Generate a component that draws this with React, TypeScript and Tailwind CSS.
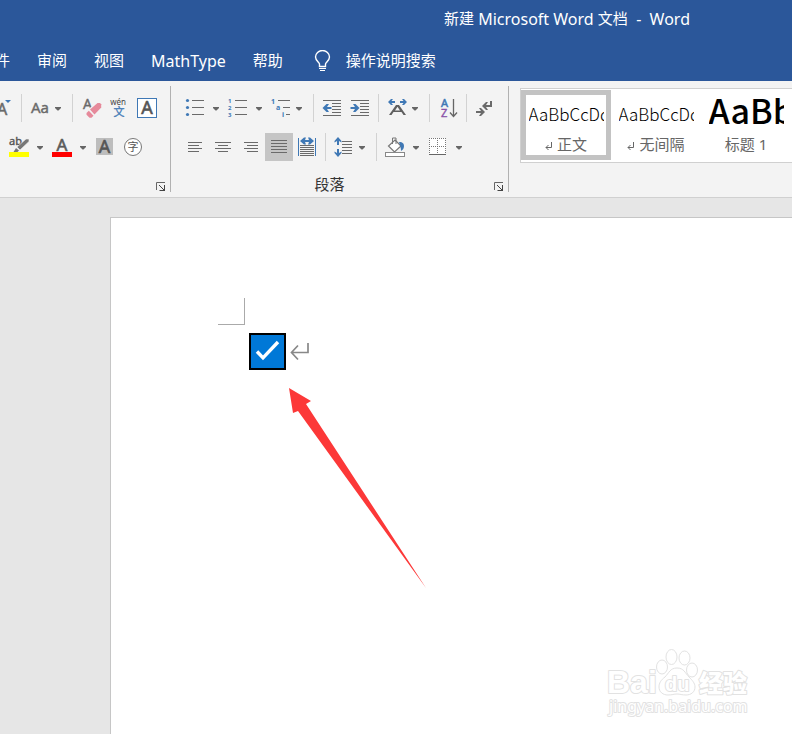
import type { ReactNode } from "react";

const BLUE = "#3f78b5";
const GRAY = "#6a6a6a";

/* Ribbon glyphs share one coordinate space; x and y pick the window that a glyph occupies. */
function Glyph({ x, y, w, h = 28, children }: { x: number; y: number; w: number; h?: number; children: ReactNode }) {
  return (
    <svg width={w} height={h} viewBox={`${x} ${y} ${w} ${h}`} className="block shrink-0" aria-hidden="true" fontFamily="'Noto Sans', 'Noto Sans CJK SC', sans-serif">
      {children}
    </svg>
  );
}

function Tool({ label, x, y, w, active = false, children }: { label: string; x: number; y: number; w: number; active?: boolean; children: ReactNode }) {
  return (
    <button type="button" aria-label={label} className={active ? "shrink-0 bg-[#c5c5c5]" : "shrink-0 hover:bg-[#dadada]"}>
      <Glyph x={x} y={y} w={w}>{children}</Glyph>
    </button>
  );
}

function Caret({ x, y }: { x: number; y: number }) {
  return <path d={`M${x} ${y}h6v1l-2.500 2.500h-1l-2.500 -2.500z`} fill="#666" />;
}

function Lines({ rows, color = GRAY }: { rows: [number, number, number][]; color?: string }) {
  return (
    <g fill={color} shapeRendering="crispEdges">
      {rows.map(([x, y, w]) => (
        <rect key={`${x}-${y}`} x={x} y={y} width={w} height="1" />
      ))}
    </g>
  );
}

function Sep() {
  return <span className="mx-2 h-7 w-px shrink-0 bg-[#d2d2d2]" />;
}

function Launcher({ label }: { label: string }) {
  return (
    <button type="button" aria-label={label}>
      <svg width="10" height="10" viewBox="0 0 10 10" className="block" aria-hidden="true">
        <path d="M.5 8V.5H9" fill="none" stroke="#666" />
        <path d="M3 3l5 5M8.500 3v5.500M3.500 8.500h5.500" fill="none" stroke="#444" />
      </svg>
    </button>
  );
}

function FontGroup() {
  return (
    <section aria-label="字体" className="flex w-[171px] shrink-0 flex-col border-r border-[#b1b1b1] pt-2">
      <div className="flex">
        <Tool label="减小字号" x={0} y={94} w={13}>
          <text x="-3" y="115" fontSize="16" fill={GRAY} stroke={GRAY} strokeWidth="0.500">A</text>
          <path d="M5 100h6l-3 3z" fill={BLUE} />
        </Tool>
        <Sep />
        <Tool label="更改大小写" x={30} y={94} w={34}>
          <text x="31" y="113" fontSize="15" fill={GRAY} stroke={GRAY} strokeWidth="0.400">Aa</text>
          <Caret x={55} y={107} />
        </Tool>
        <Sep />
        <div className="flex gap-[5px]">
          <Tool label="清除所有格式" x={81} y={94} w={22}>
            <text x="83" y="109" fontSize="14" fill={GRAY} stroke={GRAY} strokeWidth="0.400">A</text>
            <path d="M85 112l12-10h4v6l-11 11h-2l-3-3z" fill="#f3f3f3" />
            <path d="M90 109.500l7.500-6.500h2.500l1.200 1.200v3.300l-6.700 7z" fill="#e68a9b" />
            <path d="M88.800 110.800l4.700 4.900-2 2h-2l-3-3v-1.700z" fill="#e68a9b" />
          </Tool>
          <Tool label="拼音指南" x={108} y={94} w={22}>
            <text x="118" y="105" fontSize="8" textAnchor="middle" fill="#444">wén</text>
            <text x="119" y="116" fontSize="11" textAnchor="middle" fill={BLUE} stroke={BLUE} strokeWidth="0.300">文</text>
          </Tool>
          <Tool label="字符边框" x={135} y={94} w={23}>
            <rect x="137.500" y="98.500" width="19" height="19" fill="#fff" stroke={BLUE} />
            <text x="147" y="114" fontSize="18" textAnchor="middle" fill="#555" stroke="#555" strokeWidth="0.600">A</text>
          </Tool>
        </div>
      </div>
      <div className="mt-[11px] flex gap-[5px] pl-2">
        <Tool label="突出显示文本" x={8} y={133} w={38}>
          <text x="9" y="145" fontSize="11" fill="#555" stroke="#555" strokeWidth="0.400">ab</text>
          <path d="M26 139h3v2.500l-9 8.500-3-3z" fill="#777" stroke="#f3f3f3" strokeWidth="0.600" />
          <path d="M16 148l3 2.500-1.500 1.500h-4z" fill="#777" />
          <rect x="9" y="152" width="20" height="5" fill="#ff0" />
          <Caret x={37} y={146} />
        </Tool>
        <Tool label="字体颜色" x={51} y={133} w={38}>
          <text x="62" y="151" fontSize="17" textAnchor="middle" fill="#5a5a5a" stroke="#5a5a5a" strokeWidth="0.600">A</text>
          <rect x="52" y="152" width="20" height="5" fill="#f00" />
          <Caret x={80} y={146} />
        </Tool>
        <Tool label="字符底纹" x={94} y={133} w={22}>
          <rect x="96" y="138" width="17" height="17" fill="#bdbdbd" />
          <text x="104.500" y="153" fontSize="18" textAnchor="middle" fill="#555" stroke="#555" strokeWidth="0.600">A</text>
        </Tool>
        <Tool label="带圈字符" x={121} y={133} w={22}>
          <circle cx="133" cy="147" r="8.500" fill="#fff" stroke="#777" />
          <text x="133" y="151" fontSize="11" textAnchor="middle" fill="#555">字</text>
        </Tool>
      </div>
      <div className="mt-auto flex justify-end pr-1">
        <Launcher label="字体设置" />
      </div>
    </section>
  );
}

function ParagraphGroup() {
  return (
    <section aria-label="段落" className="flex w-[338px] shrink-0 flex-col border-r border-[#b1b1b1] pt-2">
      <div className="flex pl-[13px]">
        <div className="flex gap-[5px]">
          <Tool label="项目符号" x={184} y={94} w={38}>
            <g fill={BLUE}>
              <circle cx="187.500" cy="100.500" r="1.600" />
              <circle cx="187.500" cy="107.500" r="1.600" />
              <circle cx="187.500" cy="114.500" r="1.600" />
            </g>
            <Lines rows={[[192, 100, 12], [192, 107, 12], [192, 114, 12]]} />
            <Caret x={213} y={107} />
          </Tool>
          <Tool label="编号" x={227} y={94} w={38}>
            <g fill={BLUE} fontSize="6" fontWeight="700">
              <text x="228" y="103">1</text>
              <text x="228" y="110">2</text>
              <text x="228" y="117">3</text>
            </g>
            <Lines rows={[[235, 100, 12], [235, 107, 12], [235, 114, 12]]} />
            <Caret x={256} y={107} />
          </Tool>
          <Tool label="多级列表" x={270} y={94} w={35}>
            <g fill={BLUE} fontSize="7" fontWeight="700">
              <text x="271" y="104">1</text>
              <text x="276" y="110">a</text>
              <text x="282" y="117">i</text>
            </g>
            <Lines rows={[[278, 100, 12], [283, 107, 7], [286, 114, 4]]} />
            <Caret x={296} y={107} />
          </Tool>
        </div>
        <Sep />
        <div className="flex gap-1">
          <Tool label="减少缩进量" x={322} y={94} w={22}>
            <Lines rows={[[323, 100, 18], [332, 103, 9], [332, 106, 9], [332, 109, 9], [332, 112, 9], [323, 115, 18]]} />
            <path d="M322.500 108l4-4h2.500l-2 3h4.500v2h-4.500l2 3h-2.500z" fill={BLUE} />
          </Tool>
          <Tool label="增加缩进量" x={348} y={94} w={22}>
            <Lines rows={[[351, 100, 18], [360, 103, 9], [360, 106, 9], [360, 109, 9], [360, 112, 9], [351, 115, 18]]} />
            <path d="M359.500 108l-4-4h-2.500l2 3h-4.500v2h4.500l-2 3h2.500z" fill={BLUE} />
          </Tool>
        </div>
        <Sep />
        <Tool label="中文版式" x={387} y={94} w={34}>
          <path d="M388 102l3-3h2l-1.500 2h3.500v2h-3.500l1.500 2h-2zM407 102l-3-3h-2l1.500 2h-3.500v2h3.500l-1.500 2h2z" fill={BLUE} />
          <path d="M389 115l7-10h3l7 10h-2.500l-2-3h-8l-2 3zM395 110.500h5l-2.500-3.800z" fill="#5f5f5f" fillRule="evenodd" />
          <Caret x={412} y={107} />
        </Tool>
        <Sep />
        <Tool label="排序" x={438} y={94} w={20}>
          <text x="441" y="107" fontSize="11" fill={BLUE} stroke={BLUE} strokeWidth="0.500">A</text>
          <text x="441" y="117" fontSize="11" fill="#8a52a8" stroke="#8a52a8" strokeWidth="0.400">Z</text>
          <path d="M453.500 99v17M450 112.500l3.500 4 3.500-4" fill="none" stroke="#666" strokeWidth="1.300" />
        </Tool>
        <Sep />
        <Tool label="显示编辑标记" x={475} y={94} w={20}>
          <path d="M482 106l4-4h2l-2 3h4v-4h2v6h-6l2 3h-2zM485 112l-4-4h-2l2 3h-5v2h5l-2 3h2z" fill="#6a6a6a" />
        </Tool>
      </div>
      <div className="mt-[11px] flex pl-[10px]">
        <Tool label="左对齐" x={181} y={133} w={28}>
          <Lines rows={[[188, 142, 14], [188, 145, 11], [188, 148, 14], [188, 151, 11]]} />
        </Tool>
        <Tool label="居中" x={209} y={133} w={28}>
          <Lines rows={[[215, 142, 16], [218, 145, 10], [215, 148, 16], [218, 151, 10]]} />
        </Tool>
        <Tool label="右对齐" x={237} y={133} w={28}>
          <Lines rows={[[244, 142, 14], [247, 145, 11], [244, 148, 14], [247, 151, 11]]} />
        </Tool>
        <Tool label="两端对齐" x={265} y={133} w={28} active>
          <Lines rows={[[271, 140, 16], [271, 143, 16], [271, 146, 16], [271, 149, 16], [271, 152, 16]]} />
        </Tool>
        <Tool label="分散对齐" x={293} y={133} w={24}>
          <path d="M298.500 138v18M315.500 138v18" stroke={BLUE} />
          <path d="M300 141l4-3.500h2l-1 2.500h4l-1-2.500h2l4 3.500-4 3.500h-2l1-2.500h-4l1 2.500h-2z" fill={BLUE} />
          <Lines rows={[[300, 145, 14], [300, 147, 14], [300, 149, 14], [300, 151, 14], [300, 153, 14], [300, 155, 14]]} />
        </Tool>
        <Sep />
        <Tool label="行距" x={334} y={133} w={34}>
          <path d="M338 137l3.500 4v1.500l-2.500-1.500v4h-2v-4l-2.500 1.500v-1.500zM338 157l3.500-4v-1.500l-2.500 1.500v-4h-2v4l-2.500-1.500v1.500z" fill={BLUE} />
          <Lines rows={[[342, 141, 10], [342, 144, 10], [342, 147, 10], [342, 150, 10], [342, 153, 10]]} />
          <Caret x={359} y={146} />
        </Tool>
        <Sep />
        <div className="flex gap-[5px]">
          <Tool label="底纹" x={385} y={133} w={37}>
            <path d="M395 140l6 6-6.500 6-6-6z" fill="#fff" stroke="#777" strokeWidth="1.200" />
            <path d="M392.500 144v-6h3.500v6" fill="none" stroke="#777" />
            <path d="M399 142c4 0 5 2 5 4s-1 4-3 5c0-3-1-6-2-9z" fill={BLUE} />
            <rect x="385.500" y="152.500" width="19" height="4" fill="#fff" stroke="#888" />
            <Caret x={413} y={146} />
          </Tool>
          <Tool label="边框" x={427} y={133} w={38}>
            <rect x="429" y="138" width="17" height="17" fill="#fff" />
            <path d="M429 138.500h17M429 146.500h17M429.500 138v16M437.500 138v16M445.500 138v16" stroke="#777" strokeDasharray="1 1" />
            <path d="M429 154.500h17" stroke="#666" />
            <Caret x={456} y={146} />
          </Tool>
        </div>
      </div>
      <div className="mt-auto grid grid-cols-[1fr_auto_1fr] items-end pr-1">
        <span />
        <h2 className="pr-4 text-[15px] leading-[15px] text-[#333]">段落</h2>
        <div className="flex justify-end">
          <Launcher label="段落设置" />
        </div>
      </div>
    </section>
  );
}

function StyleCell({ name, mark = false, large = false, selected = false }: { name: string; mark?: boolean; large?: boolean; selected?: boolean }) {
  return (
    <button
      type="button"
      aria-pressed={selected}
      className={`flex h-[70px] w-[90px] shrink-0 flex-col items-center border-[5px] pt-[3px] ${selected ? "border-[#c3c3c3]" : "border-transparent"}`}
    >
      <span
        className={`flex h-9 w-[75px] items-start overflow-hidden whitespace-nowrap text-black [font-family:'Noto_Sans_CJK_SC',sans-serif] ${
          large ? "text-[34px] font-medium leading-6" : "text-[17px] font-light leading-8"
        }`}
      >
        {large ? "AaBb" : "AaBbCcDd"}
      </span>
      <span className="flex items-center gap-[5px] text-[15px] leading-5 text-[#666]">
        {mark && (
          <svg width="7" height="8" viewBox="0 0 7 8" className="mt-1" aria-hidden="true">
            <path d="M6.500 0v5.500H1M3.500 3L1 5.500 3.500 8" fill="none" stroke="#666" />
          </svg>
        )}
        {name}
      </span>
    </button>
  );
}

function Watermark() {
  return (
    <svg
      width="150"
      height="76"
      viewBox="604 646 150 76"
      className="absolute bottom-3 right-[38px]"
      fill="#fff"
      stroke="#e2e2e2"
      role="img"
      aria-label="Baidu 经验"
    >
      <ellipse cx="671.500" cy="657" rx="5.500" ry="7.500" />
      <ellipse cx="684.500" cy="658" rx="5.500" ry="7" />
      <ellipse cx="662" cy="667" rx="5.500" ry="7" />
      <ellipse cx="692" cy="670" rx="5.500" ry="7" />
      <path d="M677 668c-7 0-8 5-12 9-4 3-6 6-6 10 0 5 4 8 9 8 4 0 6-1 9-1s5 1 9 1c5 0 9-3 9-8 0-4-3-7-6-10-4-4-5-9-12-9z" />
      <g fontFamily="'Liberation Sans', Arial, sans-serif" fontWeight="700" strokeWidth="2" paintOrder="stroke" strokeLinejoin="round">
        <text x="607" y="693" fontSize="32">Bai</text>
        <text x="665" y="691" fontSize="20">du</text>
        <text x="699" y="692" fontSize="24" fontFamily="'Noto Sans CJK SC', sans-serif" fontWeight="900">经验</text>
      </g>
      <text x="609" y="712" fontSize="16" fontFamily="'Noto Sans', sans-serif" strokeWidth="2" paintOrder="stroke" strokeLinejoin="round">jingyan.baidu.com</text>
    </svg>
  );
}

export default function App() {
  return (
    <div className="flex min-h-screen flex-col overflow-hidden bg-[#e6e6e6] [font-family:'Noto_Sans','Noto_Sans_CJK_SC',sans-serif]">
      <header className="h-[81px] bg-[#2b579a] text-[15px] text-white">
        <h1 className="flex h-[37px] items-center justify-end whitespace-pre pr-[102px]">
          新建<span className="text-base"> Microsoft Word </span>文档<span className="text-base">{"  -  Word"}</span>
        </h1>
        <nav aria-label="功能区" className="flex h-11 items-center gap-[27px] whitespace-nowrap pb-px pt-1">
          <button type="button" className="flex w-[10px] justify-end overflow-hidden">件</button>
          <button type="button">审阅</button>
          <button type="button">视图</button>
          <button type="button" className="text-base">MathType</button>
          <button type="button">帮助</button>
          <button type="button" className="flex items-center gap-[15px] pl-1">
            <svg width="17" height="22" viewBox="0 0 17 22" className="shrink-0" fill="none" stroke="#fff" aria-hidden="true">
              <path d="M5.500 16.500v-2.500c0-1.500-4-3.500-4-7a7 6.500 0 0 1 14 0c0 3.500-4 5.500-4 7v2.500z" strokeWidth="1.400" />
              <path d="M5 18.500h7M6 20.500h5" strokeWidth="1.200" />
            </svg>
            操作说明搜索
          </button>
        </nav>
      </header>

      <div role="toolbar" aria-label="开始" className="flex h-[117px] shrink-0 border-b border-[#d0d0d0] bg-[#f3f3f3] pb-[5px] pt-[5px]">
        <FontGroup />
        <ParagraphGroup />
        <section aria-label="样式" className="ml-[11px] mt-[2px] flex h-[75px] min-w-0 flex-1 overflow-hidden border-y border-l border-[#d0d0d0] bg-white pt-px">
          <StyleCell name="正文" mark selected />
          <StyleCell name="无间隔" mark />
          <StyleCell name="标题 1" large />
        </section>
      </div>

      <main className="flex flex-1 pl-[110px] pt-[19px]">
        <article className="relative flex-1 border-l border-t border-[#c6c6c6] bg-white pl-[107px] pt-20">
          <div className="h-[27px] w-[27px] border-b border-r border-[#aaa]" />
          <div className="flex items-center gap-1 pl-[31px] pt-2">
            <label className="grid">
              <input
                type="checkbox"
                defaultChecked
                aria-label="复选框"
                className="col-start-1 row-start-1 h-[37px] w-[37px] appearance-none border-2 border-black bg-[#0078d7]"
              />
              <svg width="37" height="37" viewBox="0 0 37 37" className="pointer-events-none col-start-1 row-start-1" aria-hidden="true">
                <path d="M8 18.500l6 6.300L29 9" fill="none" stroke="#fff" strokeWidth="3.400" />
              </svg>
            </label>
            <svg width="20" height="18" viewBox="0 0 20 18" aria-hidden="true">
              <path d="M18 0v9.500H1.500M8 2.500L1.500 9.500 8 16.500" fill="none" stroke="#888" strokeWidth="1.700" />
            </svg>
          </div>
          <svg width="138" height="202" viewBox="288 387 138 202" className="absolute left-[177px] top-[169px]" aria-hidden="true">
            <path d="M289 388l22 13-5 3L426 588 298 411l-5 2z" fill="#fc3838" />
          </svg>
          <Watermark />
        </article>
      </main>
    </div>
  );
}
